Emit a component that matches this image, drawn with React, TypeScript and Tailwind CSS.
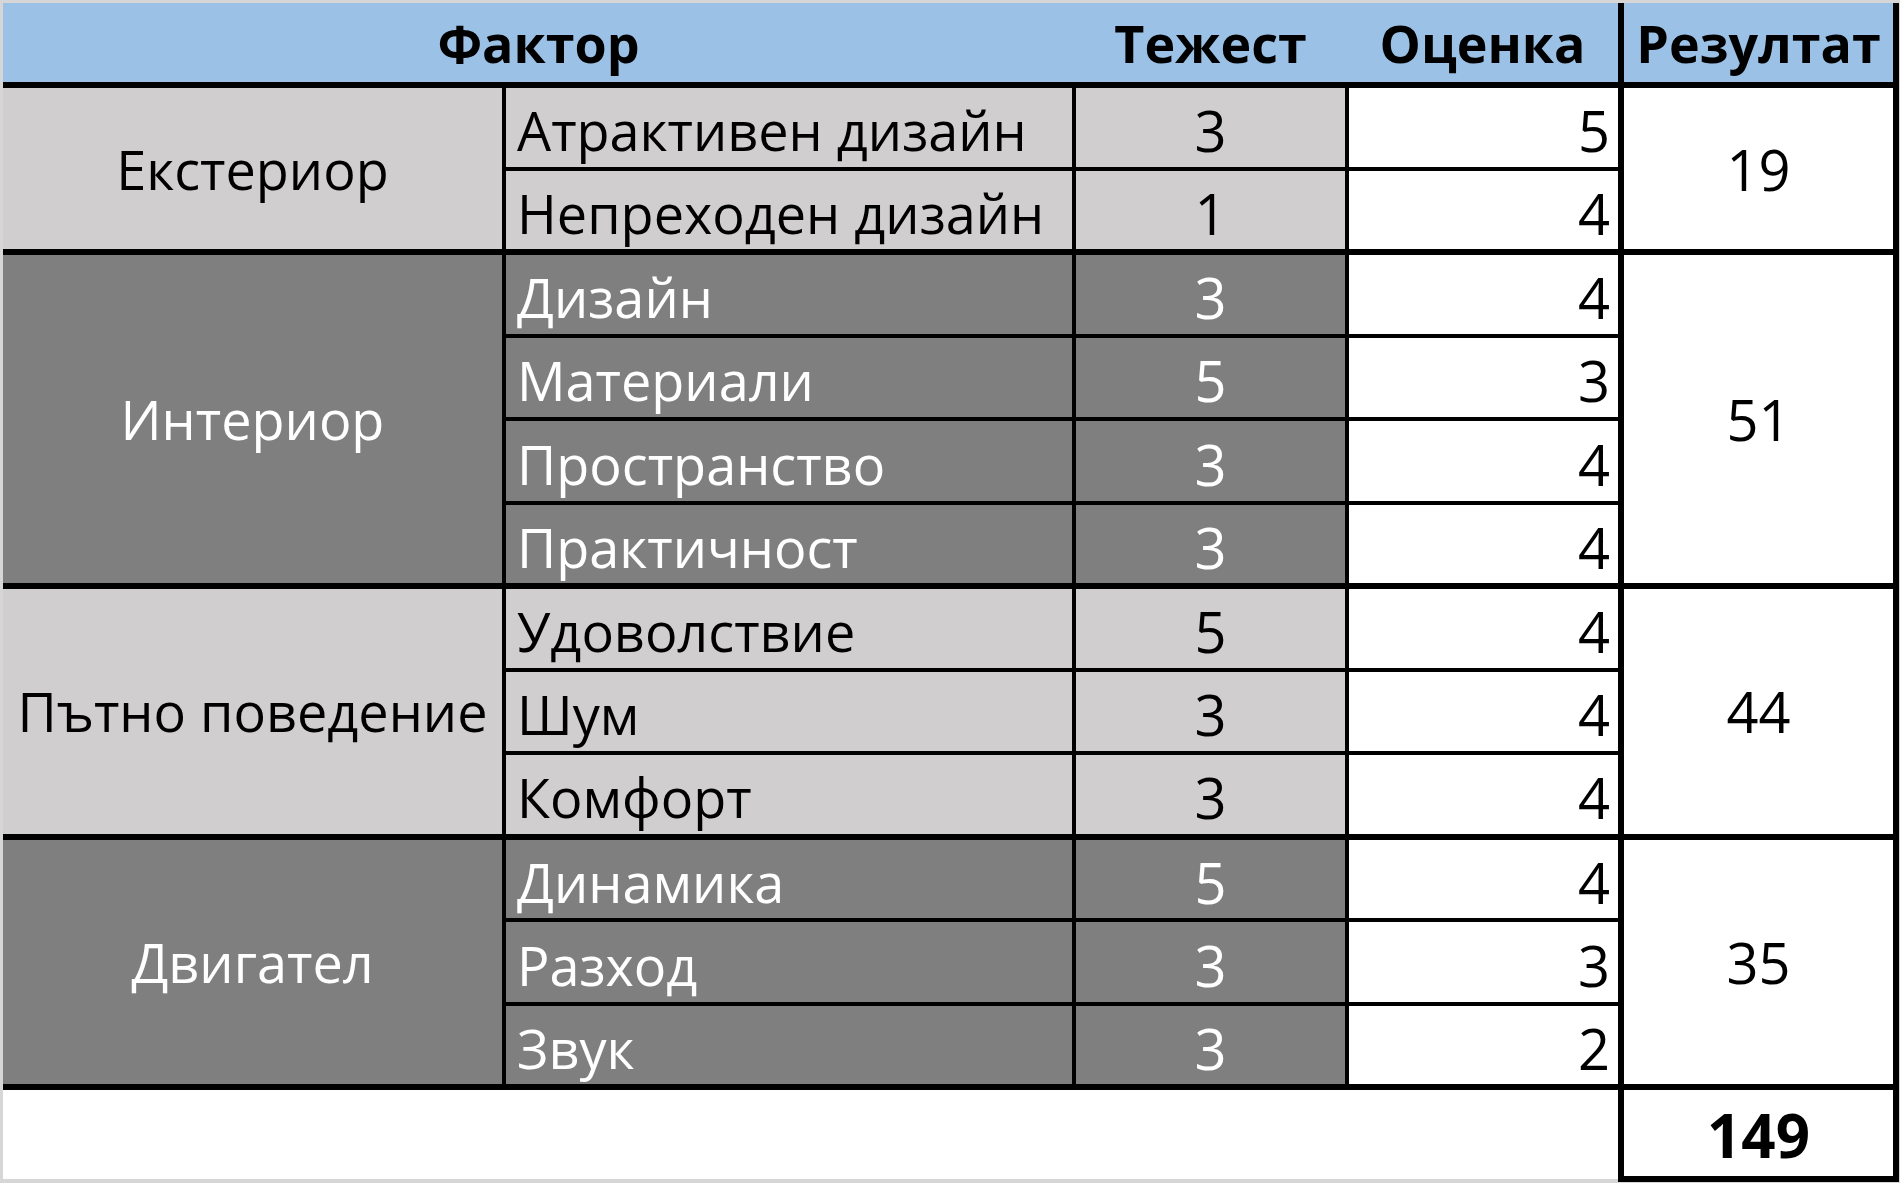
import React from 'react';

type Row = { name: string; weight: number; score: number };
type Group = { label: string; dark: boolean; result: number; rows: Row[] };

const groups: Group[] = [
  {
    label: 'Екстериор',
    dark: false,
    result: 19,
    rows: [
      { name: 'Атрактивен дизайн', weight: 3, score: 5 },
      { name: 'Непреходен дизайн', weight: 1, score: 4 },
    ],
  },
  {
    label: 'Интериор',
    dark: true,
    result: 51,
    rows: [
      { name: 'Дизайн', weight: 3, score: 4 },
      { name: 'Материали', weight: 5, score: 3 },
      { name: 'Пространство', weight: 3, score: 4 },
      { name: 'Практичност', weight: 3, score: 4 },
    ],
  },
  {
    label: 'Пътно поведение',
    dark: false,
    result: 44,
    rows: [
      { name: 'Удоволствие', weight: 5, score: 4 },
      { name: 'Шум', weight: 3, score: 4 },
      { name: 'Комфорт', weight: 3, score: 4 },
    ],
  },
  {
    label: 'Двигател',
    dark: true,
    result: 35,
    rows: [
      { name: 'Динамика', weight: 5, score: 4 },
      { name: 'Разход', weight: 3, score: 3 },
      { name: 'Звук', weight: 3, score: 2 },
    ],
  },
];

const total = groups.reduce((s, g) => s + g.result, 0);

export default function App() {
  return (
    <div
      className="min-h-screen w-full bg-[#d6d6d6] pl-[3px] pt-[3px]"
      style={{ fontFamily: '"Open Sans", "Noto Sans", sans-serif' }}
    >
      <table className="table-fixed border-collapse text-[54px] leading-none text-black">
        <colgroup>
          <col className="w-[501px]" />
          <col className="w-[570px]" />
          <col className="w-[273px]" />
          <col className="w-[274px]" />
          <col className="w-[275px]" />
        </colgroup>
        <thead>
          <tr className="h-[82px] bg-[#9bc2e6] text-[52px]">
            <th colSpan={2} className="border-b-[6px] border-black text-center font-bold">
              Фактор
            </th>
            <th className="border-b-[6px] border-black text-center font-bold">Тежест</th>
            <th className="border-b-[6px] border-black text-center font-bold">Оценка</th>
            <th className="border-x-[6px] border-b-[6px] border-black text-center font-bold">
              Резултат
            </th>
          </tr>
        </thead>
        <tbody>
          {groups.map((g) =>
            g.rows.map((r, i) => {
              const last = i === g.rows.length - 1;
              const bottom = last ? 'border-b-[6px]' : 'border-b-[4px]';
              const fill = g.dark ? 'bg-[#7f7f7f] text-white' : 'bg-[#d0cece] text-black';
              return (
                <tr key={g.label + r.name} className="h-[83.5px]">
                  {i === 0 && (
                    <td
                      rowSpan={g.rows.length}
                      className={`border-r-[4px] border-b-[6px] border-black text-center ${fill}`}
                    >
                      {g.label}
                    </td>
                  )}
                  <td className={`border-r-[4px] ${bottom} border-black pl-[11px] pt-[6px] ${fill}`}>
                    {r.name}
                  </td>
                  <td
                    className={`border-r-[4px] ${bottom} border-black pt-[6px] text-center text-[56px] ${fill}`}
                  >
                    {r.weight}
                  </td>
                  <td
                    className={`border-r-[6px] ${bottom} border-black bg-white pr-[8px] pt-[6px] text-right text-[56px]`}
                  >
                    {r.score}
                  </td>
                  {i === 0 && (
                    <td
                      rowSpan={g.rows.length}
                      className="border-r-[6px] border-b-[6px] border-black bg-white text-center text-[56px]"
                    >
                      {g.result}
                    </td>
                  )}
                </tr>
              );
            }),
          )}
          <tr className="h-[92px]">
            <td colSpan={4} className="bg-white" />
            <td className="border-x-[6px] border-b-[6px] border-black bg-white pt-[4px] text-center text-[60px] font-bold">
              {total}
            </td>
          </tr>
        </tbody>
      </table>
    </div>
  );
}
